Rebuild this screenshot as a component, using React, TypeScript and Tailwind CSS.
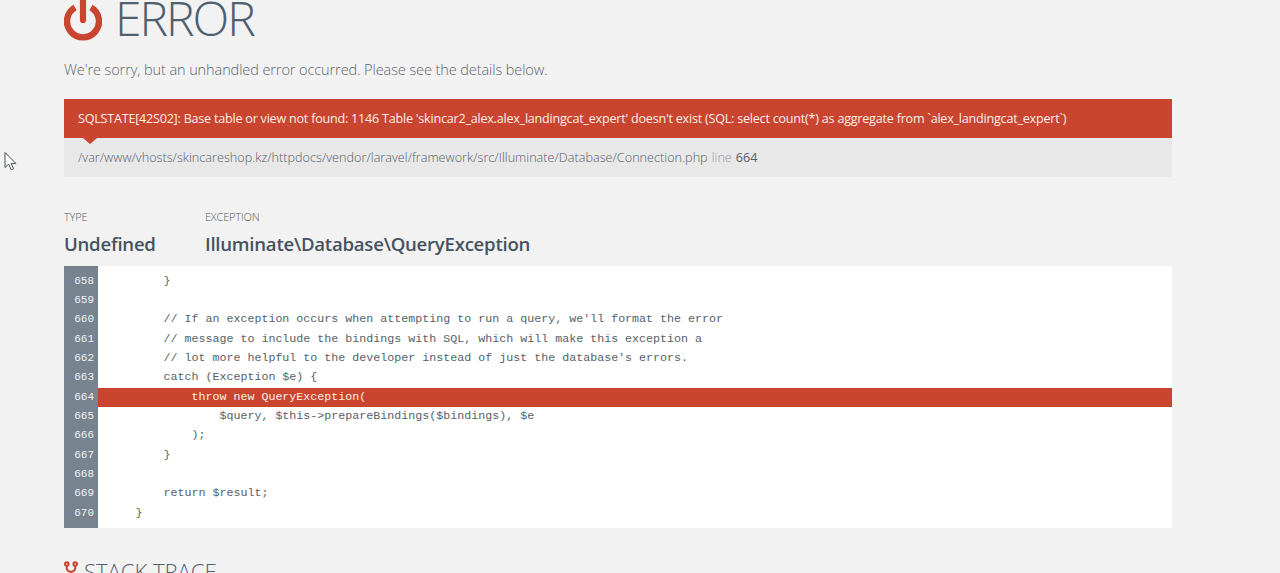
const sans = "font-['Open_Sans','Liberation_Sans',sans-serif]";

const lines: [number, string][] = [
  [658, "        }"],
  [659, ""],
  [660, "        // If an exception occurs when attempting to run a query, we'll format the error"],
  [661, "        // message to include the bindings with SQL, which will make this exception a"],
  [662, "        // lot more helpful to the developer instead of just the database's errors."],
  [663, "        catch (Exception $e) {"],
  [664, "            throw new QueryException("],
  [665, "                $query, $this->prepareBindings($bindings), $e"],
  [666, "            );"],
  [667, "        }"],
  [668, ""],
  [669, "        return $result;"],
  [670, "    }"],
];

export default function App() {
  return (
    <div className={`relative h-[573px] overflow-hidden bg-[#f2f2f2] ${sans}`}>
      <svg className="absolute left-[3px] top-[151px]" width="16" height="21" viewBox="0 0 16 21" fill="none">
        <path d="M2 1.5V16.5L5.7 13.2L8.2 18.8L10.6 17.7L8.1 12.4H12.8Z" fill="#fff" stroke="#444b52" strokeWidth="1" />
      </svg>
      <div className="mx-[64px] w-[1108px]">
        <div className="mt-[-10px] flex h-[54px] items-center gap-[13px]">
          <svg width="38" height="46" viewBox="0 0 38 46" className="mt-[1px] shrink-0" fill="none">
            <path d="M11 12.5A16 16 0 1 0 27 12.5" stroke="#c9452f" strokeWidth="6.4" strokeLinecap="butt" />
            <path d="M19 2V25" stroke="#c9452f" strokeWidth="6.2" strokeLinecap="round" />
          </svg>
          <h1 className="mt-[2px] text-[48px] font-light leading-[54px] tracking-[-2px] text-[#4f5f6f]">ERROR</h1>
        </div>
        <p className="mt-[16px] text-[14.5px] font-light leading-[20px] tracking-[-0.09px] text-[#5c6770]">
          We're sorry, but an unhandled error occurred. Please see the details below.
        </p>
        <div className="relative mt-[19px] flex h-[39px] items-center whitespace-nowrap bg-[#c9452f] px-[14px] pt-px text-[12.6px] tracking-[-0.23px] text-[#fbeee9]">
          SQLSTATE[42S02]: Base table or view not found: 1146 Table 'skincar2_alex.alex_landingcat_expert' doesn't exist (SQL: select count(*) as aggregate from `alex_landingcat_expert`)
          <div className="absolute left-[19px] top-full h-0 w-0 border-x-[7px] border-t-[6px] border-x-transparent border-t-[#c9452f]" />
        </div>
        <div className="flex h-[39px] items-center whitespace-nowrap bg-[#e8e8e8] px-[14px] pt-px text-[12.6px] font-light tracking-[0.035px] text-[#55606a]">
          /var/www/vhosts/skincareshop.kz/httpdocs/vendor/laravel/framework/src/Illuminate/Database/Connection.php
          <span className="ml-[4px] text-[#8d97a0]">line</span>
          <span className="ml-[4px] font-normal">664</span>
        </div>
        <div className="mt-[33px] flex">
          <div className="w-[141px]">
            <div className="text-[11px] font-light leading-[14px] tracking-[-0.2px] text-[#55606a]">TYPE</div>
            <div className="mt-[7px] text-[18.6px] font-semibold leading-[26px] tracking-[-0.25px] text-[#46535f]">Undefined</div>
          </div>
          <div>
            <div className="text-[11px] font-light leading-[14px] tracking-[-0.2px] text-[#55606a]">EXCEPTION</div>
            <div className="mt-[7px] text-[18.6px] font-semibold leading-[26px] tracking-[-0.25px] text-[#46535f]">Illuminate\Database\QueryException</div>
          </div>
        </div>
        <div className="mt-[9px] flex h-[262px] bg-white font-['Liberation_Mono',monospace] text-[11.67px] leading-[19.35px]">
          <div className="w-[34px] shrink-0 bg-[#77848f] pt-[5.5px] pr-[4px] text-right font-['Liberation_Mono',monospace] text-[11px] text-[#eef1f3]">
            {lines.map(([n]) => (
              <div key={n} className="h-[19.35px]">{n}</div>
            ))}
          </div>
          <div className="min-w-0 flex-1 pt-[5.5px]">
            {lines.map(([n, code]) => (
              <div
                key={n}
                className={`h-[19.35px] whitespace-pre pl-[9.5px] ${n === 664 ? "bg-[#c9452f] text-[#fbeee9]" : "text-[#555f69]"}`}
              >
                {code}
              </div>
            ))}
          </div>
        </div>
        <div className="mt-[29px] flex items-center gap-[6px]">
          <svg width="14" height="20" viewBox="0 0 14 20" fill="none" stroke="#c9452f" strokeWidth="2">
            <circle cx="2.8" cy="3" r="1.8" />
            <circle cx="11.2" cy="3" r="1.8" />
            <circle cx="7" cy="16.5" r="1.8" />
            <path d="M2.8 5V7.5Q2.8 10 7 11Q11.2 10 11.2 7.5V5M7 11V14.5" />
          </svg>
          <h2 className="text-[22px] font-light leading-[28px] text-[#4f5f6f]">STACK TRACE</h2>
        </div>
      </div>
    </div>
  );
}
